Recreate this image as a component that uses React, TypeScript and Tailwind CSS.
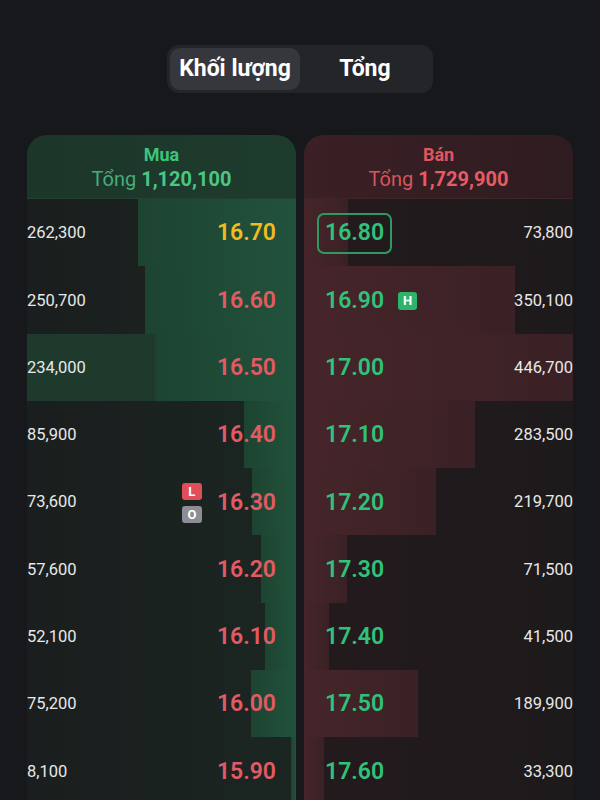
import React from 'react';

const MAX = 446700;

type Row = { vol: number; price: string };

const BIDS: Row[] = [
  { vol: 262300, price: '16.70' },
  { vol: 250700, price: '16.60' },
  { vol: 234000, price: '16.50' },
  { vol: 85900, price: '16.40' },
  { vol: 73600, price: '16.30' },
  { vol: 57600, price: '16.20' },
  { vol: 52100, price: '16.10' },
  { vol: 75200, price: '16.00' },
  { vol: 8100, price: '15.90' },
];

const ASKS: Row[] = [
  { vol: 73800, price: '16.80' },
  { vol: 350100, price: '16.90' },
  { vol: 446700, price: '17.00' },
  { vol: 283500, price: '17.10' },
  { vol: 219700, price: '17.20' },
  { vol: 71500, price: '17.30' },
  { vol: 41500, price: '17.40' },
  { vol: 189900, price: '17.50' },
  { vol: 33300, price: '17.60' },
];

const fmt = (n: number) => n.toLocaleString('en-US');

const App: React.FC = () => {
  return (
    <div className="w-[600px] h-[800px] overflow-hidden bg-[#17181c] font-['Roboto',sans-serif]">
      <div className="pt-[45px] flex justify-center">
        <div className="flex w-[266px] h-[48px] p-[3px] rounded-[12px] bg-[#242529]">
          <div className="w-[130px] rounded-[10px] bg-[#36373c] flex items-center justify-center text-[23px] font-bold text-white">
            Khối lượng
          </div>
          <div className="flex-1 flex items-center justify-center text-[23px] font-bold text-white">Tổng</div>
        </div>
      </div>

      <div className="mt-[42px] flex gap-[8px] px-[27px]">
        {/* Mua */}
        <div className="w-[269px] rounded-t-[20px] overflow-hidden bg-gradient-to-r from-[#1a1e1e] to-[#1b2622]">
          <div className="h-[64px] pt-[3px] flex flex-col items-center justify-center bg-gradient-to-r from-[#1c3629] to-[#1e3c2d] border-b border-[#24402f]">
            <div className="text-[18px] font-bold text-[#3cc47c] leading-[22px]">Mua</div>
            <div className="text-[20px] leading-[26px] text-[#46ad79]">
              Tổng <span className="font-bold text-[#4ac685]">1,120,100</span>
            </div>
          </div>
          {BIDS.map((r, i) => (
            <div
              key={r.price}
              className={`relative h-[67.3px] pt-[2px] flex items-center ${i === 2 ? 'bg-[#1d3a2c]' : ''}`}
            >
              <div
                className="absolute right-0 top-0 bottom-0 bg-gradient-to-r from-[#1d4431] to-[#21523c]"
                style={{ width: `${(r.vol / MAX) * 100}%` }}
              />
              <span className="relative text-[16.5px] text-[#e8e8e8]">{fmt(r.vol)}</span>
              <div className="relative ml-auto flex items-center pr-[20px]">
                {i === 4 && (
                  <div className="flex flex-col gap-[6px] mr-[15px]">
                    <span className="w-[20px] h-[17px] rounded-[3px] bg-[#de4f5a] text-white text-[13px] font-bold flex items-center justify-center">
                      L
                    </span>
                    <span className="w-[20px] h-[17px] rounded-[3px] bg-[#8b8e94] text-white text-[13px] font-bold flex items-center justify-center">
                      O
                    </span>
                  </div>
                )}
                <span
                  className={`text-[23px] font-semibold ${i === 0 ? 'text-[#f0bb1f]' : 'text-[#e25a64]'}`}
                >
                  {r.price}
                </span>
              </div>
            </div>
          ))}
        </div>

        {/* Bán */}
        <div className="w-[269px] rounded-t-[20px] overflow-hidden bg-gradient-to-r from-[#241a1d] to-[#1d1a1c]">
          <div className="h-[64px] pt-[3px] flex flex-col items-center justify-center bg-gradient-to-r from-[#3b2025] to-[#2e1c20] border-b border-[#3f2428]">
            <div className="text-[18px] font-bold text-[#e2545f] leading-[22px]">Bán</div>
            <div className="text-[20px] leading-[26px] text-[#d4565f]">
              Tổng <span className="font-bold text-[#e85a65]">1,729,900</span>
            </div>
          </div>
          {ASKS.map((r, i) => (
            <div key={r.price} className="relative h-[67.3px] pt-[2px] flex items-center">
              <div
                className="absolute left-0 top-0 bottom-0 bg-gradient-to-r from-[#46252a] to-[#3a2125]"
                style={{ width: `${(r.vol / MAX) * 100}%` }}
              />
              <div className="relative flex items-center pl-[21px]">
                {i === 0 ? (
                  <span className="-ml-[8px] h-[41px] px-[6px] flex items-center rounded-[7px] border-2 border-[#2e9a61] text-[23px] font-semibold text-[#30c27a]">
                    {r.price}
                  </span>
                ) : (
                  <span className="text-[23px] font-semibold text-[#30c27a]">{r.price}</span>
                )}
                {i === 1 && (
                  <span className="ml-[14px] w-[19px] h-[18px] rounded-[3px] bg-[#2db46b] text-white text-[13px] font-bold flex items-center justify-center">
                    H
                  </span>
                )}
              </div>
              <span className="relative ml-auto text-[16.5px] text-[#e8e8e8]">{fmt(r.vol)}</span>
            </div>
          ))}
        </div>
      </div>
    </div>
  );
};

export default App;
